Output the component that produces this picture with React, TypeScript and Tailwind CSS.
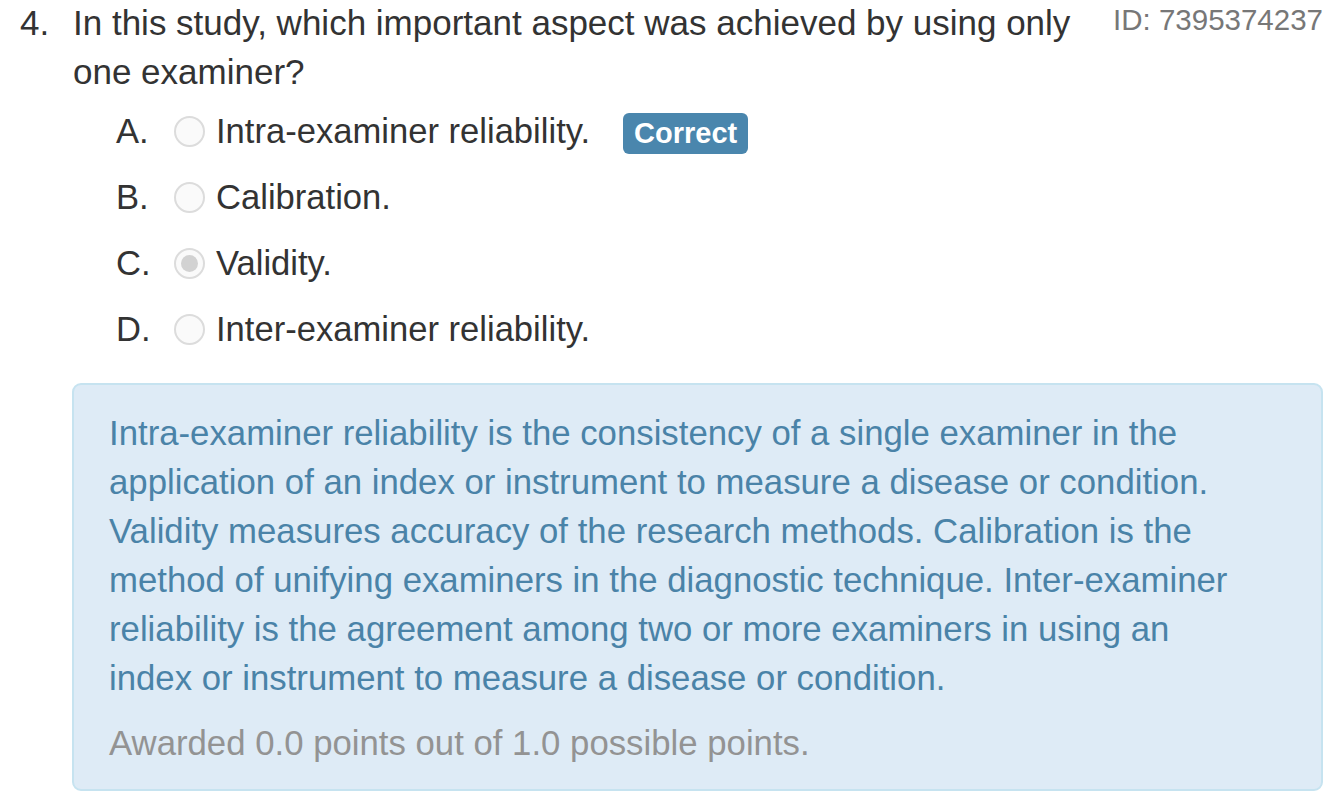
import React from "react";

function Radio({ checked }: { checked?: boolean }) {
  return (
    <span className="inline-flex h-[31px] w-[31px] shrink-0 items-center justify-center rounded-full border-2 border-[#dcdcdc] bg-[#fafafa]">
      {checked && <span className="h-[17px] w-[17px] rounded-full bg-[#d2d2d2]" />}
    </span>
  );
}

const options = [
  { l: "A.", t: "Intra-examiner reliability.", correct: true },
  { l: "B.", t: "Calibration." },
  { l: "C.", t: "Validity.", checked: true },
  { l: "D.", t: "Inter-examiner reliability." },
];

export default function App() {
  return (
    <div
      className="w-[1334px] h-[806px] bg-white text-[#333] overflow-hidden"
      style={{ fontFamily: '"Liberation Sans", Arial, sans-serif' }}
    >
      <div className="flex mt-[-2px]">
        <div className="w-[73px] shrink-0 pl-[20px] text-[35px] leading-[49px]">4.</div>
        <div className="flex-1 text-[35px] leading-[49px] pr-[20px]">
          In this study, which important aspect was achieved by using only one examiner?
        </div>
        <div className="w-[240px] shrink-0 text-right pr-[11px] text-[29.5px] leading-[44px] text-[#777]">
          ID: 7395374237
        </div>
      </div>
      <div className="mt-[11px] flex flex-col gap-[17px] pl-[116px]">
        {options.map((o) => (
          <div key={o.l} className="flex items-center h-[49px] text-[34.6px] leading-[49px]">
            <span className="w-[58px] shrink-0">{o.l}</span>
            <Radio checked={o.checked} />
            <span className="ml-[11px]">{o.t}</span>
            {o.correct && (
              <span className="ml-[33px] mt-[3px] rounded-[6px] bg-[#4a86ad] px-[11px] text-[29px] font-bold leading-[41px] text-white">
                Correct
              </span>
            )}
          </div>
        ))}
      </div>
      <div className="ml-[72px] mr-[11px] mt-[29px] rounded-[9px] border-2 border-[#c6e3f0] bg-[#deebf6] pl-[35px] pr-[70px] pt-[24px] pb-[21px]">
        <p className="text-[34.75px] leading-[49px] text-[#4a83a8]">
          Intra-examiner reliability is the consistency of a single examiner in the application of an index or instrument to measure a disease or condition. Validity measures accuracy of the research methods. Calibration is the method of unifying examiners in the diagnostic technique. Inter-examiner reliability is the agreement among two or more examiners in using an index or instrument to measure a disease or condition.
        </p>
        <p className="mt-[16px] text-[34.75px] leading-[49px] text-[#939393]">
          Awarded 0.0 points out of 1.0 possible points.
        </p>
      </div>
    </div>
  );
}
